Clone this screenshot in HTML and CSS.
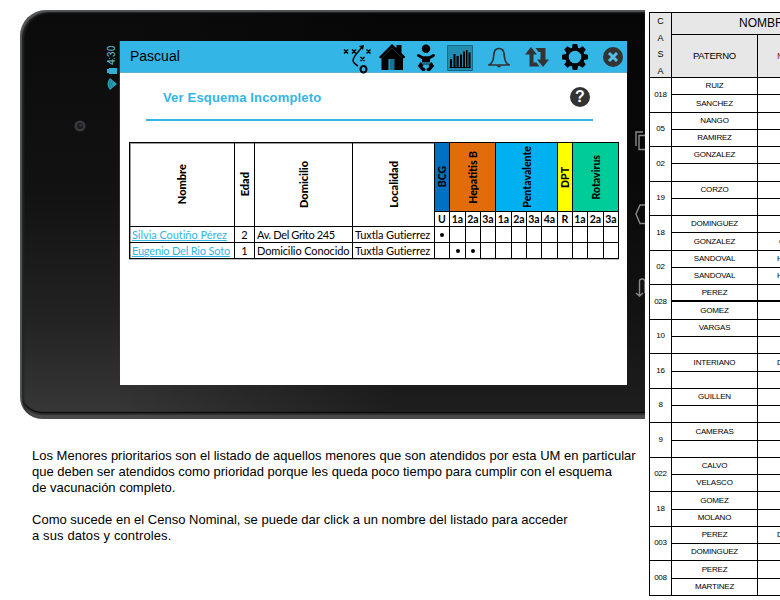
FILE: index.html
```html
<!DOCTYPE html>
<html lang="es">
<head>
<meta charset="utf-8">
<title>Ver Esquema Incompleto</title>
<link rel="stylesheet" href="styles.css">
</head>
<body>
<main class="page">
  <section class="left">
    <div class="tablet">
      <aside class="bezel">
        <svg class="camera" viewBox="0 0 12 12"><circle cx="6" cy="6" r="5.6" fill="#38383b"/><circle cx="6" cy="6" r="3" fill="#1b1b1d"/><circle cx="6.6" cy="5.4" r="1.4" fill="#343438"/></svg>
        <div class="status">
          <span class="clock">4:30</span>
          <svg class="battery" viewBox="0 0 10 6"><path d="M0 1h2V0h8v6H2V5H0z" fill="#2fb2d2"/></svg>
          <svg class="wifi" viewBox="0 0 10 12"><path d="M10 6 3 0Q-2 6 3 12z" fill="#2ba0bc"/><path d="M3.6 2Q.8 6 3.6 10M5.5 3.2Q3.6 6 5.500 8.800" stroke="#1b6475" stroke-width=".8" fill="none"/></svg>
        </div>
      </aside>
      <div class="screen">
        <header class="bar">
          <span class="user">Pascual</span>
          <svg class="ic-play" viewBox="343 44 30 30" fill="none" stroke="#000" stroke-width="1.4"><path d="m344 49.500 4 4m0-4-4 4M352 49.500l4 4m0-4-4 4M366.500 49.500l4 4m0-4-4 4M360.500 57l4 4m0-4-4 4"/><path d="M362 47.500C357 53 352.500 57 353 61q1 3 5 5"/><path d="m359 46 5-1-1 5z" fill="#000" stroke="none"/><ellipse cx="363.500" cy="69.200" rx="3" ry="3.200" stroke-width="2"/></svg>
          <svg class="ic-home" viewBox="379 44 26 27"><path d="m379 57 13-13 4.500 4V45h5v8l4 4-1.500 1.500-1-.8V70h-9.500V59h-5v11h-7V57.700l-1.200.9z"/><path d="M389.500 59h5v11h-5z" fill="#167392"/><path d="m382 57.500 10-9.500 10 9.500" fill="none" stroke="#134b5d" stroke-width=".7"/></svg>
          <svg class="ic-baby" viewBox="417 44 19 27"><circle cx="426" cy="48.700" r="4.200"/><path d="M418.500 55.500 423 58h6l4.500-2.500" fill="none" stroke="#000" stroke-width="2.800" stroke-linecap="round"/><path d="M422 56.600h8V62h-8z"/><path d="M421 62h10l-2.500 3h-5z" fill="#146b87"/><path d="m420.500 62 3 3.300-1 1.500 3.200 2.200q-.5 3-3.700 1.800L417.800 66zM431.500 62l-3 3.300 1 1.500-3.200 2.200q.5 3 3.700 1.800l4.200-4.800z"/></svg>
          <svg class="ic-chart" viewBox="447 45 26 26"><path d="M447.500 45.500h25v25h-25z" fill="#238cb1" stroke="#176782"/><path d="M450 59h2v9h-2zM453.500 54h2v14h-2zM456.500 56h2.200v12h-2.200zM460 54.500h2V68h-2zM463 51.500h2V68h-2zM466 50h1.500v18H466zM468.500 52.500h2V68h-2z"/><path d="M449.500 67.500h21" stroke="#000"/></svg>
          <svg class="ic-bell" viewBox="488 47 22 22" fill="none" stroke="#333" stroke-width="1.700"><path d="M499 48.500c-5 0-5 4.500-5.500 9s-2 6-4.500 7.500h20c-2.500-1.500-4-3-4.500-7.500s-.5-9-5.500-9z"/><path d="M496.500 65.500q2.500 4 5 0z" fill="#333" stroke="none"/></svg>
          <svg class="ic-swap" viewBox="525 46 24 22" fill="#333"><path d="m531 47 6 7.500h-3.500v8h3l3 4h-10v-12H525zM535.500 48h10v11.500h3.500L543 67l-6-7.500h3.500V52h-2z"/></svg>
          <svg class="ic-gear" viewBox="562 44 26 26"><g transform="translate(575 57)"><circle r="8" fill="none" stroke="#000" stroke-width="3.400"/><path id="t" d="M-2.300-13h4.600l.9 5h-6.400z"/><use href="#t" transform="rotate(45)"/><use href="#t" transform="rotate(90)"/><use href="#t" transform="rotate(135)"/><use href="#t" transform="rotate(180)"/><use href="#t" transform="rotate(225)"/><use href="#t" transform="rotate(270)"/><use href="#t" transform="rotate(315)"/></g></svg>
          <svg class="ic-close" viewBox="603 47 20 20"><circle cx="613" cy="57" r="10" fill="#333"/><path d="m609 53 8 8m0-8-8 8" stroke="#55bfe7" stroke-width="3"/></svg>
        </header>
        <div class="heading">
          <h1>Ver Esquema Incompleto</h1>
          <span class="help">?</span>
        </div>
        <div class="grid">
          <div class="c tall"><b>Nombre</b></div>
          <div class="c tall"><b>Edad</b></div>
          <div class="c tall"><b>Domicilio</b></div>
          <div class="c tall"><b>Localidad</b></div>
          <div class="c v bcg"><b>BCG</b></div>
          <div class="c v hep"><b>Hepatitis B</b></div>
          <div class="c v pen"><b>Pentavalente</b></div>
          <div class="c v dpt"><b>DPT</b></div>
          <div class="c v rot"><b>Rotavirus</b></div>
          <div class="c d">U</div><div class="c d">1a</div><div class="c d">2a</div><div class="c d">3a</div><div class="c d">1a</div><div class="c d">2a</div><div class="c d">3a</div><div class="c d">4a</div><div class="c d">R</div><div class="c d">1a</div><div class="c d">2a</div><div class="c d">3a</div>
          <div class="c l n1"><a>Silvia Coutiño Pérez</a></div><div class="c">2</div><div class="c l a1">Av. Del Grito 245</div><div class="c l loc">Tuxtla Gutierrez</div>
          <div class="c"><i></i></div><div class="c"></div><div class="c"></div><div class="c"></div><div class="c"></div><div class="c"></div><div class="c"></div><div class="c"></div><div class="c"></div><div class="c"></div><div class="c"></div><div class="c"></div>
          <div class="c l n2"><a>Eugenio Del Rio Soto</a></div><div class="c">1</div><div class="c l a2">Domicilio Conocido</div><div class="c l loc">Tuxtla Gutierrez</div>
          <div class="c"></div><div class="c"><i></i></div><div class="c"><i></i></div><div class="c"></div><div class="c"></div><div class="c"></div><div class="c"></div><div class="c"></div><div class="c"></div><div class="c"></div><div class="c"></div><div class="c"></div>
        </div>
      </div>
      <svg class="nav" viewBox="627 120 18 190" fill="none" stroke="#8a8a8a" stroke-width="1.400"><path d="M636 146v-14h7M646 135.500h-7v14h7M646 205h-6l-4 9 4 9.500h6M636 293l3.500 3 3.500-3M639.500 295.500V281q0-2 3-2 2.500 0 2.500 4v10"/></svg>
    </div>
    <div class="copy">
      <p>Los Menores prioritarios son el listado de aquellos menores que son atendidos por esta UM en particular<br><span class="tight">que deben ser atendidos como prioridad porque les queda poco tiempo para cumplir con el esquema</span><br><span class="tight">de vacunación completo.</span></p>
      <p>Como sucede en el Censo Nominal, se puede dar click a un nombre del listado para acceder<br><span class="wide">a sus datos y controles.</span></p>
    </div>
  </section>
  <section class="census">
    <div class="casa"><span>C</span><span>A</span><span>S</span><span>A</span></div>
    <div class="nombre">NOMBRE</div>
    <div class="th">PATERNO</div><div class="th m red">M</div>
    <div class="h">018</div><div>RUIZ</div><div class="m"></div><div>SANCHEZ</div><div class="m"></div>
    <div class="h">05</div><div>NANGO</div><div class="m"></div><div>RAMIREZ</div><div class="m"></div>
    <div class="h">02</div><div>GONZALEZ</div><div class="m"></div><div></div><div class="m"></div>
    <div class="h">19</div><div>CORZO</div><div class="m"></div><div></div><div class="m"></div>
    <div class="h">18</div><div>DOMINGUEZ</div><div class="m"></div><div>GONZALEZ</div><div class="m g">G</div>
    <div class="h">02</div><div>SANDOVAL</div><div class="m">H</div><div>SANDOVAL</div><div class="m">H</div>
    <div class="h">028</div><div class="thick">PEREZ</div><div class="m thick"></div><div>GOMEZ</div><div class="m"></div>
    <div class="h">10</div><div>VARGAS</div><div class="m"></div><div></div><div class="m"></div>
    <div class="h">16</div><div>INTERIANO</div><div class="m">D</div><div></div><div class="m"></div>
    <div class="h">8</div><div>GUILLEN</div><div class="m"></div><div></div><div class="m"></div>
    <div class="h">9</div><div>CAMERAS</div><div class="m"></div><div></div><div class="m"></div>
    <div class="h">022</div><div>CALVO</div><div class="m"></div><div>VELASCO</div><div class="m"></div>
    <div class="h">18</div><div>GOMEZ</div><div class="m"></div><div>MOLANO</div><div class="m"></div>
    <div class="h">003</div><div>PEREZ</div><div class="m">D</div><div>DOMINGUEZ</div><div class="m"></div>
    <div class="h">008</div><div>PEREZ</div><div class="m"></div><div>MARTINEZ</div><div class="m"></div>
  </section>
</main>
</body>
</html>
```
FILE: styles.css
```css
* { box-sizing: border-box; }
body { margin: 0; background: #fff; color: #000; font-family: "Liberation Sans", Arial, sans-serif; overflow: hidden; }
svg { display: block; flex: none; }
.page { display: flex; width: 780px; height: 600px; overflow: hidden; }
.left { width: 645px; flex: none; padding-top: 10px; }

/* tablet */
.tablet {
  margin-left: 20px; width: 625px; height: 409px; display: flex; padding-top: 31px;
  border-radius: 26px 0 0 22px;
  background: linear-gradient(to right, rgba(0,0,0,0) 0, rgba(0,0,0,0) 15%, rgba(0,0,0,.45) 60%, rgba(0,0,0,.45)), linear-gradient(#0b0b0b, #121212 45%, #222 75%, #383838);
  box-shadow: inset 2px 2px 1px #55585b, inset 4px 3px 2px #222, inset 0 -4px 1px #4b4b4b, inset 0 -6px 1px #2d2d2d, inset 0 -7px 1px #050505;
}
.bezel { width: 100px; height: 344px; display: flex; justify-content: space-between; padding-left: 54px; border-right: 1px solid #4a2b05; }
.camera { width: 12px; height: 12px; margin-top: 79px; }
.status { display: flex; flex-direction: column; align-items: center; width: 14px; padding-top: 4px; }
.clock { writing-mode: vertical-rl; transform: rotate(180deg); color: #6cc0d0; font: 10px/14px Roboto, sans-serif; height: 20px; }
.battery { width: 10px; height: 6px; margin-top: 3px; }
.wifi { width: 10px; height: 12px; margin-top: 4px; }
.screen { width: 507px; height: 344px; background: #fff; }
.nav { width: 18px; height: 190px; margin-top: 79px; }

.bar { height: 32px; background: #33b5e5; border-bottom: 1px solid #62adc8; display: flex; padding-top: 3px; }
.user { width: 223px; padding-left: 10px; font-size: 14px; line-height: 24px; }
.ic-play { width: 30px; height: 30px; margin-right: 6px; }
.ic-home { width: 26px; height: 27px; margin-right: 12px; }
.ic-baby { width: 19px; height: 27px; margin-right: 11px; }
.ic-chart { width: 26px; height: 26px; margin: 1px 15px 0 0; }
.ic-bell { width: 22px; height: 22px; margin: 3px 15px 0 0; }
.ic-swap { width: 24px; height: 22px; margin: 2px 13px 0 0; }
.ic-gear { width: 26px; height: 26px; margin-right: 15px; }
.ic-close { width: 20px; height: 20px; margin-top: 3px; }

.heading { display: flex; justify-content: space-between; margin: 0 34px 0 26px; height: 48px; padding: 14px 3px 0 17px; border-bottom: 2px solid #33b5e5; }
h1 { margin: 0; font-size: 13px; line-height: 21px; color: #33b5e5; letter-spacing: .17px; }
.help { width: 20px; height: 20px; border-radius: 50%; background: #333; color: #fff; font: 900 16px/20px "Liberation Sans", sans-serif; text-align: center; }

/* vaccination grid */
.grid {
  margin: 21px 0 0 9px; width: 490px; border: 1px solid #000; border-width: 1px 0 0 1px; display: grid;
  grid-template-columns: 105px 20px 98px 82px 15px 16px 15px 15px 16px 15px 15px 16px 15px 15px 16px 15px;
  grid-template-rows: 69px 15px 16px 16px; font: 11px/15px Lato, sans-serif;
  box-shadow: inset 1px 1px rgba(0,0,0,.4), 0 1px rgba(0,0,0,.25);
}
.c { border: solid #000; border-width: 0 1px 1px 0; display: flex; align-items: center; justify-content: center; white-space: nowrap; overflow: hidden; min-width: 0; }
.tall { grid-row: span 2; }
.tall b, .v b { writing-mode: vertical-rl; transform: rotate(180deg); font-weight: 900; line-height: 14px; }
.v b { font-size: 10.500px; }
.bcg { background: #0070c0; }
.hep { background: #e26b0a; grid-column: span 3; }
.pen { background: #00b0f0; grid-column: span 4; }
.dpt { background: #ff0; }
.rot { background: #0c9; grid-column: span 3; }
.d { font-weight: 700; font-size: 10.500px; padding-top: 1px; }
.l { justify-content: flex-start; padding-left: 2px; }
.l a { color: #33b5e5; text-decoration: underline; text-underline-offset: 1px; }
.n1 { letter-spacing: -.05px; }
.n2 { letter-spacing: -.19px; }
.a1 { letter-spacing: -.36px; }
.a2 { letter-spacing: -.12px; }
.loc { letter-spacing: -.1px; }
.c i { width: 4px; height: 4px; border-radius: 50%; background: #000; }

/* explanatory text */
.copy { padding: 29px 0 0 32px; font-size: 13px; line-height: 16px; letter-spacing: .01px; white-space: nowrap; }
.copy p { margin: 0 0 16px; }
.copy .tight { letter-spacing: -.02px; }
.copy .wide { letter-spacing: .12px; }

/* census table */
.census {
  margin: 12px 0 0 4px; width: 194px; height: 584px; flex: none; display: grid;
  border: solid #000; border-width: 1px 0 0 1px;
  grid-template-columns: 22px 86px 86px;
  grid-template-rows: 22px 43px 17px 18px 17px 17px 17px 18px 17px 17px 17px 18px 17px 17px 17px 18px 17px 17px 18px 17px 17px 17px 18px 17px 17px 17px 18px 17px 17px 17px 18px 17px;
  font-size: 8px;
}
.census > div { border: solid #000; border-width: 0 1px 1px 0; display: flex; align-items: center; justify-content: center; letter-spacing: -.2px; min-width: 0; padding-bottom: 1px; }
.census > .h { grid-row: span 2; padding-bottom: 2px; }
.census > .casa { grid-row: span 2; background: #e7e7e7; flex-direction: column; justify-content: space-between; padding: 3px 0 1px; font-size: 9px; line-height: 10px; }
.census > .nombre { grid-column: span 2; background: #e7e7e7; font-size: 12px; justify-content: flex-start; padding-left: 67px; letter-spacing: 0; }
.census > .th { background: #e7e7e7; font-size: 9.500px; padding-bottom: 2px; }
.census > .m { justify-content: flex-start; padding-left: 19px; }
.census > .g { padding-left: 21px; }
.census > .red { color: #b02020; }
.census > .thick { border-bottom-width: 2px; }
```
